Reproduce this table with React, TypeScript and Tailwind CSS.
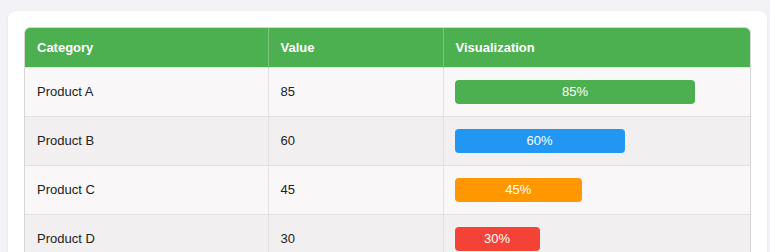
const rows = [
  { name: 'Product A', value: 85, color: 'bg-[#4caf50]' },
  { name: 'Product B', value: 60, color: 'bg-[#2196f3]' },
  { name: 'Product C', value: 45, color: 'bg-[#ff9800]' },
  { name: 'Product D', value: 30, color: 'bg-[#f44336]' },
]

export default function App() {
  return (
    <div
      className="min-h-[252px] bg-[#f3f2f7] pt-[11px] pl-2 text-[13px] text-[#222]"
      style={{ fontFamily: '"Liberation Sans", Arial, sans-serif' }}
    >
      <div className="w-[759px] rounded-lg bg-white p-4 shadow-[0_1px_4px_rgba(0,0,0,0.06)]">
        <div className="overflow-hidden rounded-t-md border border-[#d6d6d6]">
          <table className="w-full table-fixed border-collapse">
            <colgroup>
              <col className="w-[243px]" />
              <col className="w-[175px]" />
              <col />
            </colgroup>
            <thead>
              <tr className="bg-[#4caf50] text-left font-bold text-white">
                <th className="h-[39px] px-3 py-0">Category</th>
                <th className="h-[39px] border-l border-[#7cc47f] px-3 py-0">Value</th>
                <th className="h-[39px] border-l border-[#7cc47f] px-3 py-0">Visualization</th>
              </tr>
            </thead>
            <tbody>
              {rows.map((r, i) => (
                <tr
                  key={r.name}
                  className={`border-t border-[#e2e0e2] ${i % 2 === 0 ? 'bg-[#f9f7f8]' : 'bg-[#f1eff0]'}`}
                >
                  <td className="h-[49px] px-3">{r.name}</td>
                  <td className="h-[49px] border-l border-[#e2e0e2] px-3">{r.value}</td>
                  <td className="h-[49px] border-l border-[#e2e0e2] pl-[11px] pr-3">
                    <div
                      className={`flex h-6 items-center justify-center rounded ${r.color} text-white`}
                      style={{ width: `${r.value}%` }}
                    >
                      {r.value}%
                    </div>
                  </td>
                </tr>
              ))}
            </tbody>
          </table>
        </div>
      </div>
    </div>
  )
}
